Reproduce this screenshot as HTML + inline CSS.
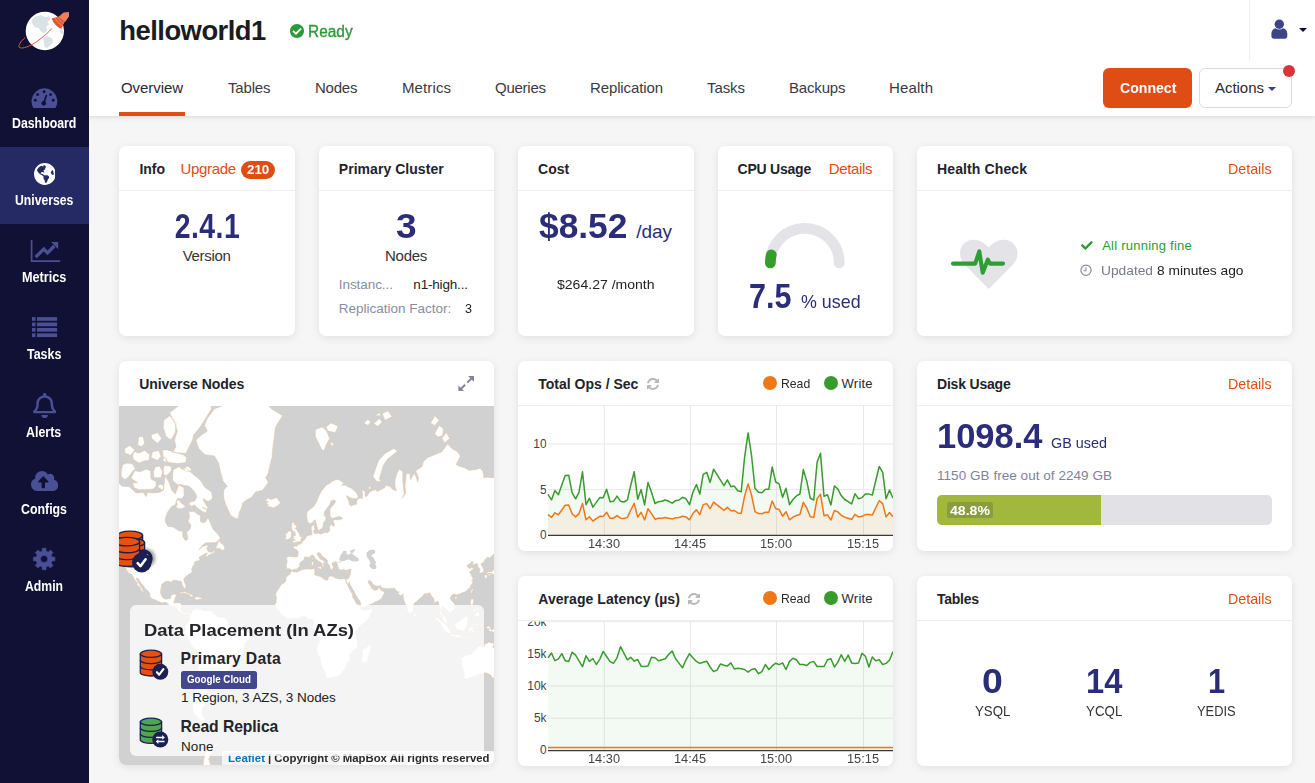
<!DOCTYPE html>
<html lang="en"><head><meta charset="utf-8"><title>helloworld1 - Overview</title>
<style>
html,body{margin:0;padding:0}
body{width:1315px;height:783px;overflow:hidden;background:#f6f6f6;font-family:"Liberation Sans",sans-serif;color:#333;position:relative}
.t{position:absolute;white-space:nowrap;line-height:1;display:block}
.ic{position:absolute;display:block}
.abs{position:absolute}
#side{position:absolute;left:0;top:0;width:89px;height:783px;background:#111135}
#side .act{position:absolute;left:0;top:147px;width:89px;height:77px;background:#252a65}
#head{position:absolute;left:89px;top:0;width:1226px;height:116px;background:#fff;box-shadow:0 1px 5px rgba(0,0,0,.13)}
.card{position:absolute;background:#fff;border-radius:7px;box-shadow:0 2px 9px rgba(0,0,0,.09);overflow:hidden}
.card .hr{position:absolute;left:0;right:0;top:44px;height:1px;background:#eeeef0}
.btn{position:absolute;top:68px;height:40px;border-radius:6px;box-sizing:border-box}
</style></head><body>
<nav id="side"><div class="act"></div><svg class="ic" style="left:14px;top:6px;width:62px;height:50px" viewBox="14 6 62 50">
<circle cx="44.85" cy="31" r="19.15" fill="#fff"/>
<path d="M31.5 21C33 17.5 37 15.5 41 15.3L45 17 49 16.5 50.5 19 47.5 22 49 24.5 46 27 47.5 30 44 33.5 40.5 31 39 28 35.5 27.5 33 25ZM43 37.5L47 36 51.5 38 53.5 41 51 45 47 48 44.5 47 44 42ZM59.5 29.5L62.5 29 63 33 61 34.5Z" fill="#dae2e6"/>
<path d="M51.7 28.7C45 36 37 41.5 33 44 27 47.5 21 49 19.3 47.3 18 45.5 20.5 41.5 24.9 37.9" fill="none" stroke="#e0602f" stroke-width="1" stroke-linecap="round"/>
<path d="M59 16.5L51.7 18.4C53 22.5 56.5 26.5 61.3 28.9L64.7 21.8Z" fill="#e4572e"/>
<path d="M55 17.6C56.2 21 59 24 62.9 25.6M57.6 17C58.6 19.8 60.8 22 63.9 23.5" fill="none" stroke="#ef8a66" stroke-width=".9"/>
<path d="M63.6 12.6L69 11.9V16.5L64.9 22.2 58.6 16.7Z" fill="#ee7f5a"/>
</svg><svg class="ic" style="left:30px;top:87px;width:30px;height:23px" viewBox="30 87 30 23"><path d="M33.40 108A12.90 12.90 0 1 1 55.40 108Q44.40 108.1 33.40 108Z" fill="#4a4f96"/><circle cx="35.3" cy="100.3" r="1.45" fill="#111135"/><circle cx="37.6" cy="94.6" r="1.45" fill="#111135"/><circle cx="44.1" cy="91.7" r="1.45" fill="#111135"/><circle cx="50.6" cy="94.6" r="1.45" fill="#111135"/><circle cx="53.2" cy="100.3" r="1.45" fill="#111135"/><circle cx="43.8" cy="103.3" r="2.3" fill="#111135"/><path d="M43.8 103.3L46.3 95.6" stroke="#111135" stroke-width="1.7" stroke-linecap="round"/></svg><svg class="ic" style="left:33.5px;top:163.2px;width:21.8px;height:21.9px" viewBox="0 8 496 496" preserveAspectRatio="none" ><path fill="#fff" d="M248 8C111.03 8 0 119.03 0 256s111.03 248 248 248 248-111.03 248-248S384.97 8 248 8zm82.29 357.6c-3.9 3.88-7.99 7.95-11.31 11.28-2.99 3-5.1 6.7-6.17 10.71-1.51 5.66-2.73 11.38-4.77 16.87l-17.39 46.85c-13.76 3-28 4.69-42.65 4.69v-27.38c1.69-12.62-7.64-36.26-22.63-51.25-6-6-9.37-14.14-9.37-22.63v-32.01c0-11.64-6.27-22.34-16.46-27.97-14.37-7.95-34.81-19.06-48.81-26.11-11.48-5.78-22.1-13.14-31.65-21.75l-.8-.72a114.792 114.792 0 0 1-18.06-20.74c-9.38-13.77-24.66-36.42-34.59-51.14 20.47-45.5 57.36-82.04 103.2-101.89l24.01 12.01C203.48 89.74 216 82.01 216 70.11v-11.3c7.99-1.29 16.12-2.11 24.39-2.42l28.3 28.3c6.25 6.25 6.25 16.38 0 22.63L264 112l-10.34 10.34c-3.12 3.12-3.12 8.19 0 11.31l4.69 4.69c3.12 3.12 3.12 8.19 0 11.31l-8 8a8.008 8.008 0 0 1-5.66 2.34h-8.99c-2.08 0-4.08.81-5.58 2.27l-9.92 9.65a8.008 8.008 0 0 0-1.58 9.31l15.59 31.19c2.66 5.32-1.21 11.58-7.15 11.58h-5.64c-1.93 0-3.79-.7-5.24-1.96l-9.28-8.06a16.017 16.017 0 0 0-15.55-3.1l-31.17 10.39a11.95 11.95 0 0 0-8.17 11.34c0 4.53 2.56 8.66 6.61 10.69l11.08 5.54c9.41 4.71 19.79 7.16 30.31 7.16s22.59 27.29 32 32h66.75c8.49 0 16.62 3.37 22.63 9.37l13.69 13.69a30.503 30.503 0 0 1 8.93 21.57 46.536 46.536 0 0 1-13.72 32.98zM417 274.25c-5.79-1.45-10.84-5-14.15-9.97l-17.98-26.97a23.97 23.97 0 0 1 0-26.62l19.59-29.38c2.32-3.47 5.5-6.29 9.24-8.15l12.98-6.49C440.2 193.59 448 223.87 448 256c0 8.67-.74 17.16-1.82 25.54L417 274.25z"/></svg><svg class="ic" style="left:30px;top:239px;width:32px;height:24px" viewBox="30 239 32 24"><path d="M31.6 240V261.1H60.2" fill="none" stroke="#4a4f96" stroke-width="1.7"/><path d="M35.6 257.2L43.8 249 47.5 252.8 54.3 246" fill="none" stroke="#4a4f96" stroke-width="3.3" stroke-linejoin="miter"/><path d="M51.2 242.1H58.2V249.2Z" fill="#4a4f96"/></svg><svg class="ic" style="left:31px;top:316px;width:28px;height:23px" viewBox="31 316 28 23"><rect x="32" y="317.10" width="3.5" height="3.7" fill="#4a4f96"/><rect x="37" y="317.10" width="20.1" height="3.7" fill="#4a4f96"/><rect x="32" y="322.52" width="3.5" height="3.7" fill="#4a4f96"/><rect x="37" y="322.52" width="20.1" height="3.7" fill="#4a4f96"/><rect x="32" y="327.94" width="3.5" height="3.7" fill="#4a4f96"/><rect x="37" y="327.94" width="20.1" height="3.7" fill="#4a4f96"/><rect x="32" y="333.36" width="3.5" height="3.7" fill="#4a4f96"/><rect x="37" y="333.36" width="20.1" height="3.7" fill="#4a4f96"/></svg><svg class="ic" style="left:32.6px;top:392.6px;width:23.4px;height:25px" viewBox="-0 0 448 512" preserveAspectRatio="none" ><path fill="#4a4f96" d="M439.39 362.29c-19.32-20.76-55.47-51.99-55.47-154.29 0-77.7-54.48-139.9-127.94-155.16V32c0-17.67-14.32-32-31.98-32s-31.98 14.33-31.98 32v20.84C118.56 68.1 64.08 130.3 64.08 208c0 102.3-36.15 133.53-55.47 154.29-6 6.45-8.66 14.16-8.61 21.71.11 16.4 12.98 32 32.1 32h383.8c19.12 0 32-15.6 32.1-32 .05-7.55-2.61-15.27-8.61-21.71zM67.53 368c21.22-27.97 44.42-74.33 44.53-159.42 0-.2-.06-.38-.06-.58 0-61.86 50.14-112 112-112s112 50.14 112 112c0 .2-.06.38-.06.58.11 85.1 23.31 131.46 44.53 159.42H67.53zM224 512c35.32 0 63.97-28.65 63.97-64H160.03c0 35.35 28.65 64 63.97 64z"/></svg><svg class="ic" style="left:30.7px;top:471.3px;width:27.3px;height:20px" viewBox="0 32 640 448" preserveAspectRatio="none" ><path fill="#4a4f96" d="M537.6 226.6c4.1-10.7 6.4-22.4 6.4-34.6 0-53-43-96-96-96-19.7 0-38.1 6-53.3 16.2C367 64.2 315.3 32 256 32c-88.4 0-160 71.6-160 160 0 2.7.1 5.4.2 8.1C40.2 219.8 0 273.2 0 336c0 79.5 64.5 144 144 144h368c70.7 0 128-57.3 128-128 0-61.9-44-113.6-102.4-125.4zM393.4 288H328v112c0 8.8-7.2 16-16 16h-48c-8.8 0-16-7.2-16-16V288h-65.4c-14.3 0-21.4-17.2-11.3-27.3l105.4-105.4c6.2-6.2 16.4-6.2 22.6 0l105.4 105.4c10.1 10.1 2.9 27.3-11.3 27.3z"/></svg><svg class="ic" style="left:32px;top:547px;width:25px;height:25px" viewBox="32 547 25 25"><path d="M42.30 548.21L46.00 548.21L46.15 551.15L48.28 552.03L50.47 550.06L53.09 552.68L51.12 554.87L52.00 557.00L54.94 557.15L54.94 560.85L52.00 561.00L51.12 563.13L53.09 565.32L50.47 567.94L48.28 565.97L46.15 566.85L46.00 569.79L42.30 569.79L42.15 566.85L40.02 565.97L37.83 567.94L35.21 565.32L37.18 563.13L36.30 561.00L33.36 560.85L33.36 557.15L36.30 557.00L37.18 554.87L35.21 552.68L37.83 550.06L40.02 552.03L42.15 551.15ZM40.55 559.00a3.6 3.6 0 1 0 7.2 0a3.6 3.6 0 1 0 -7.2 0Z" fill="#4a4f96" fill-rule="evenodd" stroke="#4a4f96" stroke-width=".6" stroke-linejoin="round"/></svg><span class="t" style="left:11.90px;top:116.82px;font-size:13.8px;font-weight:700;color:#fff;transform:scale(0.8935,1.0000);transform-origin:0 84.65%;">Dashboard</span><span class="t" style="left:14.70px;top:193.82px;font-size:13.8px;font-weight:700;color:#fff;transform:scale(0.8838,1.0000);transform-origin:0 84.65%;">Universes</span><span class="t" style="left:21.80px;top:270.82px;font-size:13.8px;font-weight:700;color:#fff;transform:scale(0.9190,1.0000);transform-origin:0 84.65%;">Metrics</span><span class="t" style="left:26.80px;top:347.82px;font-size:13.8px;font-weight:700;color:#fff;transform:scale(0.9027,1.0000);transform-origin:0 84.65%;">Tasks</span><span class="t" style="left:26.40px;top:425.82px;font-size:13.8px;font-weight:700;color:#fff;transform:scale(0.9000,1.0000);transform-origin:0 84.65%;">Alerts</span><span class="t" style="left:21.00px;top:502.82px;font-size:13.8px;font-weight:700;color:#fff;transform:scale(0.8956,1.0000);transform-origin:0 84.65%;">Configs</span><span class="t" style="left:25.20px;top:579.82px;font-size:13.8px;font-weight:700;color:#fff;transform:scale(0.8853,1.0000);transform-origin:0 84.65%;">Admin</span></nav><header><div id="head"></div><span class="t" style="left:119.30px;top:17.21px;font-size:27.4px;font-weight:700;color:#1b1b22;letter-spacing:-0.519px;">helloworld1</span><svg class="ic" style="left:289.9px;top:24.2px;width:14px;height:14px" viewBox="8 8 496 496" preserveAspectRatio="none" ><path fill="#2b9b38" d="M504 256c0 136.967-111.033 248-248 248S8 392.967 8 256 119.033 8 256 8s248 111.033 248 248zM227.314 387.314l184-184c6.248-6.248 6.248-16.379 0-22.627l-22.627-22.627c-6.248-6.249-16.379-6.249-22.628 0L216 308.118l-70.059-70.059c-6.248-6.248-16.379-6.248-22.628 0l-22.627 22.627c-6.248 6.248-6.248 16.379 0 22.627l104 104c6.249 6.249 16.379 6.249 22.628.001z"/></svg><span class="t" style="left:308.40px;top:23.78px;font-size:16.8px;color:#2b9b38;transform:scale(0.9193,1.0000);transform-origin:0 84.65%;-webkit-text-stroke:.4px #2b9b38;">Ready</span><span class="t" style="left:121.00px;top:80.10px;font-size:15px;color:#2a2a30;letter-spacing:-0.074px;">Overview</span><span class="t" style="left:228.00px;top:80.10px;font-size:15px;color:#3a3a42;letter-spacing:-0.172px;">Tables</span><span class="t" style="left:315.00px;top:80.10px;font-size:15px;color:#3a3a42;letter-spacing:-0.215px;">Nodes</span><span class="t" style="left:402.00px;top:80.10px;font-size:15px;color:#3a3a42;letter-spacing:0.109px;">Metrics</span><span class="t" style="left:495.00px;top:80.10px;font-size:15px;color:#3a3a42;letter-spacing:-0.255px;">Queries</span><span class="t" style="left:590.00px;top:80.10px;font-size:15px;color:#3a3a42;letter-spacing:-0.122px;">Replication</span><span class="t" style="left:707.00px;top:80.10px;font-size:15px;color:#3a3a42;letter-spacing:-0.086px;">Tasks</span><span class="t" style="left:789.00px;top:80.10px;font-size:15px;color:#3a3a42;letter-spacing:-0.174px;">Backups</span><span class="t" style="left:889.00px;top:80.10px;font-size:15px;color:#3a3a42;letter-spacing:0.128px;">Health</span><div class="abs" style="left:119px;top:112px;width:66px;height:4px;background:#e04d14"></div><div class="abs" style="left:1249px;top:0;width:1px;height:60px;background:#eeeef1"></div><svg class="ic" style="left:1270px;top:18px;width:19px;height:22px" viewBox="1270 18 19 22"><circle cx="1279.3" cy="24.3" r="4.7" fill="#3f4487"/><path d="M1271.4 36.2V33.6C1271.4 30.6 1273.4 28.6 1275.6 28.3 1277.8 29.9 1280.8 29.9 1283 28.3 1285.3 28.6 1287.3 30.6 1287.3 33.6V36.2C1287.3 37.7 1286.2 38.7 1284.8 38.7H1273.9C1272.5 38.7 1271.4 37.7 1271.4 36.2Z" fill="#3f4487"/></svg><svg class="ic" style="left:1299px;top:28px;width:8px;height:4px" viewBox="0 0 8 4"><path d="M0 0h8L4 4z" fill="#0e0e2c"/></svg><div class="btn" style="left:1103px;width:89px;background:#e04d14"></div><span class="t" style="left:1119.60px;top:80.30px;font-size:15px;font-weight:700;color:#fff;transform:scale(0.9400,1.0000);transform-origin:0 84.65%;">Connect</span><div class="btn" style="left:1199px;width:93px;background:#fff;border:1px solid #dcdce0"></div><span class="t" style="left:1215.00px;top:80.30px;font-size:15px;color:#2a2a30;letter-spacing:-0.034px;">Actions</span><svg class="ic" style="left:1268px;top:87px;width:8px;height:4px" viewBox="0 0 8 4"><path d="M0 0h8L4 4z" fill="#3a3f8f"/></svg><div class="abs" style="left:1283px;top:64.7px;width:12px;height:12px;border-radius:6px;background:#d93438"></div></header><main><section class="row"><div class="card" style="left:119px;top:146px;width:175.5px;height:190px"><div class="hr"></div></div><span class="t" style="left:139.50px;top:161.65px;font-size:14px;font-weight:700;color:#232329;letter-spacing:-0.052px;">Info</span><span class="t" style="left:180.60px;top:160.80px;font-size:15px;color:#e04d14;letter-spacing:-0.358px;">Upgrade</span><div class="abs" style="left:241px;top:161px;width:34px;height:18px;border-radius:9px;background:#e04d14"></div><span class="t" style="left:246.85px;top:163.83px;font-size:12.6px;font-weight:700;color:#fff;transform:scale(1.0611,1.0000);transform-origin:0 84.65%;">210</span><span class="t" style="left:174.81px;top:213.76px;font-size:28.4px;font-weight:700;color:#2b2d78;letter-spacing:0.444px;transform:scale(1.0000,1.2150);transform-origin:0 84.65%;">2.4.1</span><span class="t" style="left:182.75px;top:248.10px;font-size:15px;letter-spacing:-0.324px;">Version</span><div class="card" style="left:318.5px;top:146px;width:175.5px;height:190px"><div class="hr"></div></div><span class="t" style="left:338.80px;top:161.65px;font-size:14px;font-weight:700;color:#232329;letter-spacing:0.044px;">Primary Cluster</span><span class="t" style="left:395.61px;top:213.76px;font-size:28.4px;font-weight:700;color:#2b2d78;transform:scale(1.3060,1.2150);transform-origin:0 84.65%;">3</span><span class="t" style="left:385.05px;top:248.10px;font-size:15px;letter-spacing:-0.265px;">Nodes</span><span class="t" style="left:338.80px;top:277.57px;font-size:13.5px;color:#8a8c9f;letter-spacing:-0.065px;">Instanc...</span><span class="t" style="left:413.30px;top:277.57px;font-size:13.5px;color:#222;letter-spacing:-0.177px;">n1-high...</span><span class="t" style="left:338.80px;top:301.57px;font-size:13.5px;color:#8a8c9f;">Replication Factor:</span><span class="t" style="left:465.00px;top:301.57px;font-size:13.5px;color:#222;transform:scale(0.9314,1.0000);transform-origin:0 84.65%;">3</span><div class="card" style="left:518px;top:146px;width:175.5px;height:190px"><div class="hr"></div></div><span class="t" style="left:538.00px;top:161.85px;font-size:14px;font-weight:700;color:#232329;letter-spacing:0.025px;">Cost</span><span class="t" style="left:538.86px;top:213.76px;font-size:28.4px;font-weight:700;color:#2b2d78;transform:scale(1.2447,1.2150);transform-origin:0 84.65%;">$8.52</span><span class="t" style="left:636.30px;top:221.52px;font-size:19px;color:#2b2d78;letter-spacing:-0.041px;">/day</span><span class="t" style="left:556.80px;top:278.00px;font-size:13px;color:#222;transform:scale(1.0801,1.0000);transform-origin:0 84.65%;">$264.27 /month</span><div class="card" style="left:717.5px;top:146px;width:175.5px;height:190px"><div class="hr"></div></div><span class="t" style="left:737.60px;top:161.85px;font-size:14px;font-weight:700;color:#232329;letter-spacing:-0.234px;">CPU Usage</span><span class="t" style="left:828.70px;top:161.00px;font-size:15px;color:#e04d14;letter-spacing:-0.327px;">Details</span><svg class="ic" style="left:750px;top:210px;width:110px;height:65px" viewBox="750 210 110 65"><path d="M770.35 262.90A34.45 34.45 0 0 1 839.25 262.90" fill="none" stroke="#e3e3e8" stroke-width="10.7" stroke-linecap="round"/><path d="M770.35 262.90A34.45 34.45 0 0 1 771.30 254.86" fill="none" stroke="#33a02c" stroke-width="10.7" stroke-linecap="round"/></svg><span class="t" style="left:749.06px;top:283.56px;font-size:28.4px;font-weight:700;color:#2b2d78;transform:scale(1.0750,1.2150);transform-origin:0 84.65%;">7.5</span><span class="t" style="left:801.20px;top:291.92px;font-size:19px;color:#2b2d78;transform:scale(0.9404,1.0000);transform-origin:0 84.65%;">% used</span><div class="card" style="left:917px;top:146px;width:375px;height:190px"><div class="hr"></div></div><span class="t" style="left:937.00px;top:161.85px;font-size:14px;font-weight:700;color:#232329;letter-spacing:0.118px;">Health Check</span><span class="t" style="left:1227.80px;top:161.00px;font-size:15px;color:#e04d14;transform:scale(0.9507,1.0000);transform-origin:0 84.65%;">Details</span><svg class="ic" style="left:945px;top:235px;width:80px;height:60px" viewBox="945 235 80 60">
<path d="M988.7 289.1L964.5 264.5C957.5 257 959 246 966.5 241.7 973.5 237.7 982 240 988.7 247.5 995.4 240 1004 237.7 1011 241.7 1018.5 246 1020 257 1013 264.5Z" fill="#e3e3e8"/>
<path d="M953 263.6H975.2L979.3 251.4 982.7 272.8 987.8 259.7 990 263.6H1003" fill="none" stroke="#2e9d35" stroke-width="4.1" stroke-linecap="round" stroke-linejoin="round"/></svg><svg class="ic" style="left:1081.1px;top:241.1px;width:11.7px;height:9px" viewBox="0 65.1 512 381.8" preserveAspectRatio="none" ><path fill="#2b9b38" d="M173.898 439.404l-166.4-166.4c-9.997-9.997-9.997-26.206 0-36.204l36.203-36.204c9.997-9.998 26.207-9.998 36.204 0L192 312.69 432.095 72.596c9.997-9.997 26.207-9.997 36.204 0l36.203 36.204c9.997 9.997 9.997 26.206 0 36.204l-294.4 294.401c-9.998 9.997-26.207 9.997-36.204-.001z"/></svg><span class="t" style="left:1102.20px;top:238.80px;font-size:13px;color:#2b9b38;letter-spacing:0.240px;">All running fine</span><svg class="ic" style="left:1079px;top:263px;width:14px;height:14px" viewBox="1079 263 14 14"><circle cx="1086" cy="270.3" r="5.1" fill="none" stroke="#8a8c9f" stroke-width="1.2"/><path d="M1086 267.2V270.7H1083.4" fill="none" stroke="#8a8c9f" stroke-width="1.1"/></svg><span class="t" style="left:1101.00px;top:263.50px;font-size:13px;color:#777b8a;transform:scale(1.0579,1.0000);transform-origin:0 84.65%;">Updated</span><span class="t" style="left:1157.40px;top:263.50px;font-size:13px;color:#222;transform:scale(1.0591,1.0000);transform-origin:0 84.65%;">8 minutes ago</span></section><section class="map"><div class="card" style="left:119px;top:361px;width:375px;height:404px"><svg class="ic" style="left:0;top:45px;width:375px;height:359px" viewBox="119 406 375 359"><rect x="119" y="406" width="375" height="359" fill="#d1d1d1"/><path d="M99.2,485.8L107.7,487.0L114.8,483.8L117.7,482.1L121.9,486.2L129.0,486.6L136.1,492.9L143.3,492.5L146.1,496.6L147.5,492.5L154.6,492.9L160.3,492.1L163.2,490.2L165.3,475.9L168.9,482.1L171.7,490.2L175.3,494.0L178.8,485.0L183.8,487.5L184.1,495.8L181.7,498.7L177.4,498.4L175.3,504.5L171.0,507.1L167.4,512.4L165.3,518.3L165.3,521.9L168.1,526.5L173.1,527.0L178.8,530.8L182.7,531.3L182.8,536.4L185.2,540.3L187.3,539.9L187.6,536.4L186.6,532.3L190.2,529.0L190.9,525.1L188.1,521.6L189.5,516.9L188.8,511.2L194.5,511.8L198.0,514.5L200.7,515.4L200.1,521.1L203.0,523.0L205.8,521.6L208.0,517.4L210.8,523.8L212.9,529.0L215.8,532.0L218.6,535.2L220.3,538.0L218.9,539.9L215.8,542.6L211.5,542.8L205.8,542.8L202.3,545.4L200.1,548.6L198.7,549.9L202.3,546.5L207.3,545.0L208.3,546.5L206.5,548.0L207.5,549.7L208.0,551.3L209.4,552.0L212.2,552.4L213.9,549.7L214.7,551.8L212.9,553.4L209.4,554.8L206.5,556.8L205.5,556.2L207.5,553.2L205.8,553.4L204.4,554.2L201.6,555.8L199.7,556.8L199.0,558.5L200.1,559.7L200.1,560.4L198.0,560.8L195.9,561.2L194.5,562.3L194.5,564.2L193.0,565.6L192.7,567.1L191.6,568.9L191.9,570.7L192.3,571.9L190.9,572.9L188.8,574.3L187.1,575.5L184.8,577.4L183.9,579.5L184.1,581.5L185.1,583.4L185.9,586.0L185.5,588.4L184.5,588.5L183.4,587.0L181.9,584.4L182.1,582.5L180.2,580.8L178.1,581.3L176.7,580.2L174.5,580.3L172.4,580.5L172.7,582.3L171.0,582.1L169.1,581.5L166.3,581.3L164.6,582.1L161.7,584.4L161.3,587.3L160.6,590.4L160.6,592.9L161.5,595.5L162.7,597.6L164.6,598.7L165.7,599.3L168.1,598.7L169.9,598.7L170.8,597.2L171.1,595.0L173.8,594.3L176.0,594.3L176.3,595.8L175.1,597.8L174.8,599.3L174.1,601.8L173.4,602.8L175.3,602.8L177.7,602.7L180.2,603.0L181.4,604.0L181.1,607.0L180.7,609.6L181.7,611.3L182.8,612.6L184.5,613.0L186.2,612.0L188.1,612.2L189.8,613.5L190.5,614.2L192.3,610.6L193.7,609.9L195.9,609.1L197.7,607.8L198.3,609.9L200.1,609.1L200.1,608.3L202.3,610.4L205.8,610.4L208.0,611.0L210.1,610.3L211.5,610.4L212.9,612.0L213.7,613.5L215.8,614.5L217.9,616.8L221.5,617.2L223.6,617.6L225.7,618.8L227.2,620.2L228.6,623.0L228.6,625.2L227.9,626.0L230.7,626.3L232.9,626.6L236.4,628.9L238.5,629.2L240.7,629.7L243.5,629.9L246.4,632.1L249.5,633.0L250.2,635.9L249.9,638.5L247.8,640.8L246.4,642.8L244.7,644.2L244.2,647.2L244.2,650.9L243.2,653.9L241.8,656.9L240.0,659.2L237.8,659.2L235.7,660.5L233.6,661.2L231.4,663.1L230.6,665.5L230.4,667.9L228.6,670.4L227.2,672.8L225.3,674.5L223.6,677.1L221.8,678.6L219.3,678.6L216.8,677.1L218.2,679.7L218.6,681.4L217.6,684.1L214.4,685.7L211.5,685.7L211.1,688.7L208.7,689.6L207.3,689.3L207.3,691.9L209.1,692.7L207.0,694.4L206.5,697.4L203.7,699.4L203.8,701.5L206.1,703.2L203.7,706.9L201.6,709.1L201.6,712.5L202.4,713.4L202.3,715.5L205.8,719.2L207.0,718.9L204.4,720.4L200.9,720.4L198.0,717.9L195.2,714.8L193.3,712.5L192.3,708.0L192.3,703.6L193.7,701.1L192.3,700.5L194.5,695.4L195.9,691.5L194.7,690.6L195.2,686.8L195.0,683.2L196.2,680.5L197.6,676.2L198.0,672.0L198.2,668.7L198.9,665.5L199.4,662.3L199.6,659.2L199.9,656.2L199.7,652.2L198.0,650.6L195.2,649.1L192.7,647.6L191.2,645.4L189.9,642.8L188.5,639.9L187.3,637.3L186.1,635.3L184.2,634.1L184.1,631.7L185.5,630.4L185.9,629.2L184.6,628.7L185.1,627.0L185.9,625.5L185.9,624.3L187.5,623.8L188.1,622.0L189.8,620.2L189.5,617.8L189.6,615.6L188.5,614.6L188.3,613.6L187.3,612.7L186.2,613.3L185.4,613.9L185.9,615.0L184.5,615.2L183.5,614.2L181.8,613.9L180.7,613.3L180.8,612.6L179.2,611.9L178.7,611.3L177.7,611.0L177.8,609.7L176.4,608.1L175.1,607.0L174.8,606.5L173.1,606.4L171.4,605.8L169.6,605.3L168.4,604.6L166.3,602.5L164.6,602.2L162.5,603.0L160.3,602.2L157.8,601.2L155.3,599.9L152.5,599.0L150.4,597.5L149.7,595.8L149.9,594.1L148.9,592.0L146.4,589.6L144.3,587.8L144.0,586.0L142.5,584.9L141.1,583.3L139.7,581.2L138.6,578.9L136.4,577.9L136.6,579.5L138.3,582.0L139.4,584.4L140.8,586.6L142.1,588.9L142.8,590.1L144.0,591.7L143.3,592.1L142.1,591.0L140.4,589.3L140.1,587.3L138.3,586.0L136.9,584.4L137.3,582.8L135.4,580.8L134.3,579.2L133.2,576.7L131.3,574.1L128.3,573.3L128.0,571.9L126.3,569.6L125.5,567.6L124.8,566.6L123.6,564.4L122.9,562.7L123.2,559.7L122.6,557.7L123.3,554.2L123.3,551.3L122.3,546.7L124.8,547.2L125.5,548.6L125.1,545.4L122.6,543.2L119.1,541.0L117.7,537.6L114.8,533.3L112.7,530.3L109.8,525.1L106.3,522.5L103.4,519.7L99.2,518.3ZM124.2,546.7L121.9,545.9L117.2,541.7L118.4,541.2L121.6,542.8L123.6,545.0ZM212.5,497.3L211.5,492.1L204.4,487.0L202.3,482.9L198.7,478.6L194.5,475.4L190.2,471.7L185.2,467.2L183.1,469.7L178.8,466.7L173.1,469.7L172.4,479.9L175.3,482.9L178.1,485.0L180.2,484.2L183.1,485.0L187.3,485.8L190.2,487.0L193.7,491.0L195.9,494.0L196.6,497.6L194.5,501.1L189.5,502.2L188.8,504.5L191.6,506.5L194.5,504.8L198.0,508.4L202.3,511.5L205.8,512.7L207.3,510.0L202.3,507.1L206.5,509.3L208.0,507.8L204.4,502.2L203.0,498.7L208.0,501.5L211.5,499.4ZM131.2,477.7L134.7,470.7L140.4,471.7L146.1,469.2L150.4,470.7L151.1,479.0L156.1,482.1L156.1,486.2L153.2,489.0L146.1,489.4L139.0,489.8L134.0,487.5L132.6,483.3L137.6,482.5L132.6,479.5ZM121.2,475.9L124.8,479.5L128.3,477.3L132.6,471.2L135.4,468.7L132.6,464.1L126.9,463.1L122.6,464.7L121.2,471.7ZM133.3,459.3L139.0,463.1L144.0,460.9L148.9,460.4L149.7,454.7L144.7,450.5L139.0,452.9L134.0,451.7L132.6,455.9ZM153.9,477.7L161.0,477.7L162.5,471.7L159.6,466.2L155.3,466.7L153.5,471.7ZM163.9,475.0L166.7,475.4L171.4,470.7L171.0,466.2L164.2,465.2L163.2,470.7ZM158.2,487.5L163.2,490.2L164.2,486.2L161.0,484.2L158.2,485.0ZM163.2,457.6L168.9,462.5L177.4,463.6L185.9,462.5L186.6,457.6L183.1,454.7L173.1,451.7L167.4,449.9L162.5,449.9ZM151.1,457.6L157.5,460.4L161.0,456.4L158.9,450.5L152.5,451.7ZM172.4,452.3L185.9,453.5L189.1,446.7L192.3,440.6L193.7,434.9L200.1,427.1L204.4,420.3L211.5,408.8L210.1,402.4L200.1,396.7L188.8,397.9L177.4,406.7L169.6,412.8L174.5,422.9L177.4,431.1L174.5,439.9L176.0,446.7ZM163.2,427.1L166.0,436.4L171.0,439.9L175.3,432.6L176.0,422.9L169.6,415.7L163.9,420.3ZM151.8,438.5L157.5,443.4L161.7,438.5L157.5,432.6L151.1,434.9ZM124.8,452.9L130.5,455.3L134.7,449.9L129.7,445.4L124.8,448.6ZM137.6,444.7L141.1,446.7L144.7,443.4L143.3,437.1L139.0,436.4ZM162.5,460.4L166.0,462.5L167.0,458.7L163.9,456.4ZM184.5,470.7L188.8,471.7L191.6,469.7L188.1,466.2L185.2,466.7ZM183.1,536.1L185.6,536.9L185.1,535.9ZM176.0,501.1L179.5,500.1L180.9,502.8L184.5,505.5L185.5,506.8L182.4,508.4L178.8,508.7L175.7,506.8L177.4,504.5ZM215.4,548.4L216.5,546.3L218.2,541.9L220.6,539.9L220.1,542.8L222.9,544.3L224.3,546.3L224.7,548.6L223.6,550.3L220.8,549.7L220.1,548.4ZM178.8,593.7L181.7,592.0L184.5,591.7L187.3,592.7L190.2,594.1L193.0,595.5L194.2,596.3L192.3,596.7L189.2,596.7L190.2,595.6L188.1,594.3L185.2,593.5L183.1,592.9L180.9,593.4L179.5,594.0ZM193.9,598.7L195.9,596.7L197.7,596.9L200.1,597.2L202.4,598.7L201.6,599.1L199.4,599.3L197.7,600.0L195.2,599.3ZM188.3,599.0L191.2,599.3L190.3,599.9L188.5,599.6ZM204.1,598.8L206.4,599.0L206.3,599.6L204.1,599.6ZM198.7,448.6L205.1,454.7L214.4,455.9L218.6,463.1L220.8,473.1L222.9,480.8L227.2,486.2L223.6,490.2L223.6,497.6L225.7,504.5L228.6,510.9L230.7,515.4L235.0,518.0L237.3,518.9L238.5,516.9L239.3,512.4L241.4,507.8L242.8,502.8L246.4,500.1L251.3,497.6L255.6,492.1L262.7,490.2L267.0,484.2L268.4,482.1L265.6,477.7L268.4,473.1L269.8,465.7L272.0,457.6L272.7,448.6L274.1,438.5L275.5,427.1L282.6,415.7L271.3,408.8L257.0,393.1L242.8,393.1L228.6,403.5L214.4,408.8L207.3,418.5L204.4,425.4L207.3,431.1L201.6,434.9L195.9,439.9ZM265.1,501.1L267.7,498.0L271.3,499.4L276.9,497.6L279.1,501.1L280.4,502.8L278.4,505.2L273.4,508.1L269.8,506.8L267.4,506.8L268.4,504.5L265.6,503.2L268.4,501.8ZM286.9,568.9L286.2,565.8L287.2,561.6L286.6,557.7L288.3,556.4L291.9,556.8L294.7,557.0L297.1,557.0L298.0,554.8L298.1,551.8L296.6,549.7L293.3,548.0L292.9,546.7L295.4,545.9L297.4,546.3L297.1,543.9L298.1,544.6L300.0,544.3L301.8,543.0L302.0,541.2L304.0,540.3L305.4,538.7L306.4,536.4L308.2,535.4L309.9,535.0L311.8,535.0L311.9,531.8L311.4,530.3L311.2,527.8L311.8,526.2L314.6,524.6L314.3,527.8L315.1,528.5L313.9,530.3L313.4,531.5L313.9,532.8L315.3,534.0L316.8,533.5L318.9,533.0L320.0,534.2L322.5,533.3L326.0,532.3L327.6,533.0L328.1,531.8L329.6,531.0L329.6,527.0L330.3,525.1L331.8,524.6L333.1,526.5L334.1,525.9L334.3,523.0L333.1,521.9L333.0,520.5L335.3,519.7L339.5,519.7L342.7,518.6L340.2,516.6L336.7,517.1L332.4,518.6L330.0,516.3L330.0,512.4L329.9,509.3L331.7,506.8L334.5,503.5L335.7,501.1L333.8,500.1L331.0,500.8L330.0,504.2L326.7,508.7L324.6,511.5L324.2,515.4L326.0,517.7L325.7,520.0L323.6,522.2L323.2,525.1L322.5,528.5L320.3,529.0L319.9,530.5L318.2,530.5L317.6,528.5L316.5,525.1L315.6,521.1L314.9,519.7L313.2,521.4L311.1,523.5L309.4,523.5L307.7,521.6L306.8,517.4L306.8,513.9L307.2,511.8L309.7,509.6L311.8,508.1L313.9,506.1L316.1,502.8L317.5,499.4L318.9,495.8L321.0,491.7L323.2,489.0L326.0,485.4L328.9,483.8L332.4,481.2L336.4,479.5L339.5,479.9L343.8,482.9L341.7,485.4L345.2,485.0L347.3,486.6L351.6,488.2L356.6,492.9L358.3,496.6L356.6,498.7L352.3,498.4L348.8,496.9L346.3,495.8L348.8,501.1L349.2,504.5L351.6,506.1L353.7,504.8L356.6,504.2L356.6,500.5L359.7,498.0L362.3,498.7L362.7,494.0L361.6,489.8L365.1,491.4L365.1,496.6L367.3,495.8L369.4,492.1L375.1,489.4L377.2,491.4L382.2,489.0L385.0,487.5L385.7,485.0L390.7,487.0L392.1,489.0L396.4,491.0L395.0,486.2L395.0,479.9L397.1,473.1L399.3,469.2L402.8,471.7L402.8,479.9L403.5,488.2L404.2,494.0L402.1,498.4L405.7,492.9L404.9,486.2L405.7,479.9L406.4,473.1L409.9,474.0L410.6,479.9L414.2,473.1L416.3,477.7L417.7,482.1L418.5,477.7L415.6,470.7L422.0,466.7L423.4,461.5L427.7,457.6L434.8,454.7L441.9,451.7L447.6,444.1L451.9,448.6L457.6,451.7L460.4,455.9L456.1,464.7L460.4,466.7L464.7,467.7L468.9,470.2L475.3,469.7L480.3,468.2L483.2,471.7L483.9,477.7L487.4,477.3L491.7,477.7L496.0,477.7L498.8,473.1L505.9,473.1L513.0,518.3L500.2,536.4L499.5,543.2L498.8,547.6L496.0,551.8L493.1,554.8L489.6,558.1L487.4,557.3L485.6,559.1L484.3,560.6L483.9,561.9L481.0,563.8L481.0,564.9L482.2,566.0L483.7,568.9L483.9,571.5L483.2,572.2L481.0,572.9L479.3,573.1L479.6,571.0L479.8,568.9L478.9,567.6L477.5,567.3L477.9,565.8L477.8,564.4L476.5,563.6L474.6,564.2L472.5,565.6L472.9,563.4L473.2,562.1L471.8,561.8L469.7,563.8L467.5,564.9L467.1,566.2L468.8,568.0L469.7,568.5L471.5,567.5L473.9,568.2L473.6,569.1L471.1,570.7L469.4,572.4L470.7,573.6L471.5,575.8L472.9,577.9L473.1,579.4L471.5,580.3L472.9,581.0L472.6,583.3L471.2,584.9L470.1,587.3L468.9,588.5L467.5,589.8L465.7,591.5L462.5,592.6L461.3,593.2L458.3,594.3L456.7,594.7L456.4,596.1L455.7,594.4L454.0,594.0L451.9,595.0L451.3,596.3L450.2,598.1L451.2,599.9L452.6,601.7L454.4,603.3L455.1,606.2L455.0,608.4L453.6,609.9L451.9,610.7L451.2,612.0L449.0,613.3L448.7,611.6L448.0,610.7L446.9,610.4L445.9,608.8L444.8,607.8L443.2,607.4L442.6,606.2L441.9,607.0L441.8,608.7L440.8,610.9L441.2,612.5L442.2,613.6L442.6,615.3L444.1,615.9L445.2,616.8L446.6,618.5L446.9,620.2L446.9,621.9L447.9,623.6L446.8,623.6L445.1,622.5L443.8,621.5L442.8,619.6L442.3,617.8L442.2,616.3L441.2,615.2L439.8,614.2L439.5,612.7L439.9,610.6L440.1,608.4L439.4,606.2L438.8,604.0L438.5,601.8L437.4,601.1L435.5,602.8L433.8,602.5L434.1,600.3L433.4,598.1L432.0,596.6L430.8,595.0L430.3,593.1L428.4,593.1L426.3,593.8L424.1,594.1L423.1,595.8L421.3,597.2L419.2,599.1L416.7,601.5L414.9,602.7L413.8,604.0L413.8,606.7L413.2,609.1L413.2,610.9L412.1,612.3L410.9,612.9L409.9,614.0L408.5,612.7L407.5,609.9L406.1,607.0L405.4,604.0L404.2,601.8L403.4,598.2L403.1,595.8L403.0,593.8L402.4,594.9L400.5,595.5L398.1,593.7L397.8,593.1L399.7,592.1L397.5,591.7L396.4,590.7L395.3,589.5L394.3,588.2L391.4,588.5L387.2,588.7L383.6,588.2L381.2,587.6L380.5,585.7L377.9,586.2L375.8,586.0L372.9,584.4L371.5,581.7L370.1,580.7L368.7,580.8L368.0,581.7L368.7,583.4L370.1,585.4L371.1,586.8L371.9,588.9L372.5,587.3L372.9,588.4L372.9,589.8L374.4,590.1L376.5,590.3L378.3,588.4L379.8,587.0L380.1,589.2L381.5,590.7L383.2,591.2L384.7,592.7L382.9,595.8L381.9,598.1L380.1,599.6L377.9,601.1L375.1,601.8L373.9,603.1L370.8,604.3L368.0,605.5L363.7,607.2L361.6,607.4L360.9,605.5L360.4,603.3L360.1,601.4L358.7,599.6L357.3,597.3L355.5,594.6L354.5,592.0L352.7,589.6L351.6,587.3L349.9,584.4L349.2,583.3L349.5,581.7L348.6,583.9L348.3,584.4L347.3,583.3L346.1,581.0L345.6,578.9L348.1,578.7L349.1,577.5L349.5,575.8L350.6,573.3L350.8,571.0L351.2,569.4L349.2,569.2L347.3,570.3L345.2,570.3L343.2,569.2L341.7,570.3L339.8,569.4L338.5,568.9L338.4,567.1L337.4,566.2L337.8,564.4L337.0,563.4L336.7,562.3L336.4,561.8L333.8,561.9L333.5,563.4L332.1,562.7L332.0,564.7L333.1,566.2L333.8,567.1L332.7,568.0L332.7,569.6L331.6,569.8L330.6,569.2L329.9,567.5L330.3,566.6L329.3,565.3L328.1,564.0L327.3,562.5L327.4,560.2L326.0,558.7L323.9,557.3L321.7,555.8L320.7,553.8L319.2,552.6L317.3,553.0L317.3,555.2L319.0,556.8L319.9,558.9L322.5,559.9L325.3,562.3L326.0,563.2L324.2,562.7L323.7,562.7L323.2,564.2L324.0,565.3L323.2,566.4L322.0,567.2L322.2,565.6L322.0,563.4L320.3,562.1L318.2,561.0L317.1,560.0L315.3,558.7L314.3,556.8L313.6,555.6L312.2,555.0L310.4,556.2L308.9,557.5L306.8,557.0L305.4,556.8L304.0,557.7L304.3,559.1L302.8,560.8L300.8,561.9L299.3,564.4L300.0,565.6L298.8,567.1L297.1,568.9L296.4,569.2L293.4,569.4L292.0,570.5L290.7,569.6L289.7,568.5L288.3,568.9ZM345.6,578.9L343.8,578.4L342.1,579.0L338.1,578.7L335.3,578.0L332.4,576.3L330.3,576.0L328.1,577.5L328.1,579.5L326.7,580.3L323.9,579.2L321.5,577.0L318.5,576.0L315.6,575.3L314.2,574.1L315.1,571.9L314.6,569.8L315.3,568.9L313.9,568.4L311.8,569.1L308.9,568.9L305.4,569.1L304.0,569.2L301.1,570.0L298.8,571.2L296.9,572.2L295.4,571.9L293.3,572.1L292.0,570.8L291.2,571.2L290.0,574.1L288.3,575.2L286.6,576.8L285.8,578.5L285.9,580.3L285.2,582.0L283.3,583.6L281.2,584.6L279.8,586.8L278.4,589.2L276.9,590.9L275.5,594.6L276.5,597.3L276.2,600.3L276.2,602.5L274.8,604.5L275.8,606.5L275.9,608.0L277.7,609.4L278.8,610.9L280.2,612.0L280.9,613.5L281.9,615.0L283.5,615.9L285.5,617.3L287.6,618.8L289.0,619.3L291.2,618.6L294.0,618.2L296.9,618.8L299.7,617.8L301.4,616.9L303.3,616.6L305.4,616.6L306.8,617.3L307.5,619.1L308.9,619.5L311.1,619.2L312.5,619.6L313.5,620.3L313.6,622.0L313.2,624.2L312.9,625.6L312.2,626.7L313.2,628.7L314.6,630.6L316.5,632.3L317.2,634.1L318.2,636.3L318.6,638.5L319.3,641.1L318.9,643.2L317.5,645.3L316.8,647.9L316.5,650.6L317.2,652.8L318.6,655.9L320.2,658.5L320.3,660.8L321.0,664.4L322.5,667.6L323.9,670.0L325.0,672.8L325.7,675.0L325.9,677.4L327.4,678.3L328.1,678.5L331.0,677.4L333.8,677.2L336.3,677.1L338.8,675.7L340.9,673.7L343.1,671.2L344.1,669.5L345.9,667.6L346.5,664.7L346.3,663.6L348.1,662.2L350.2,660.8L350.2,657.7L349.5,655.4L349.5,654.3L351.6,652.7L353.7,650.6L356.6,649.0L357.7,646.9L357.4,644.2L357.3,641.3L356.6,639.9L355.9,637.7L355.7,635.3L355.0,633.4L355.6,632.0L356.6,629.9L358.0,628.4L359.4,626.7L361.6,624.6L364.4,622.5L367.3,619.9L369.4,617.1L370.8,614.2L372.2,610.9L372.7,608.7L370.8,609.0L368.0,609.6L365.1,610.1L363.0,610.7L361.3,609.1L360.9,607.5L359.4,605.9L357.7,604.3L356.2,603.3L355.2,601.1L354.2,599.1L352.7,597.3L352.6,595.0L352.2,593.5L350.3,590.7L349.5,588.9L348.1,586.0L347.3,584.4L346.2,582.1L345.9,581.0ZM369.8,642.8L371.2,647.9L370.1,650.9L368.7,655.4L367.3,660.0L366.5,662.3L364.0,663.1L362.3,662.0L361.3,658.5L362.7,655.1L362.3,651.6L363.0,649.0L365.5,648.1L367.7,646.4L369.0,644.2ZM291.9,543.0L294.7,542.6L297.6,541.7L300.1,541.5L301.7,540.6L300.6,539.9L302.0,537.6L301.5,536.6L300.1,536.6L299.8,535.0L299.0,533.0L297.6,531.5L296.9,529.5L295.4,529.0L296.1,527.8L296.9,525.1L294.7,524.6L294.0,524.9L295.1,522.5L292.6,522.2L291.5,524.9L291.6,527.8L291.9,530.3L292.9,530.8L292.6,532.0L294.7,531.8L295.3,534.0L295.4,535.4L293.6,535.7L293.3,536.9L294.0,537.8L292.4,539.2L294.0,539.6L295.4,540.1L293.7,540.6ZM285.5,539.6L287.6,539.6L290.6,538.3L291.2,535.7L291.7,532.8L290.7,531.0L288.3,531.0L287.6,532.8L285.5,533.5L285.8,535.7L286.2,537.1L285.1,538.5ZM317.5,567.1L321.9,566.6L321.3,569.4L317.5,567.8ZM311.4,561.8L313.5,561.4L313.5,564.9L311.8,565.3ZM311.9,558.7L313.2,557.9L312.9,560.6ZM333.3,571.5L337.1,572.1L333.8,572.4ZM345.6,572.4L348.8,571.4L347.9,572.6L345.9,573.1ZM315.3,436.4L318.9,443.4L321.0,448.6L323.9,451.1L326.0,445.4L329.6,438.5L326.7,431.1L322.5,427.1L315.3,429.5ZM326.0,427.1L331.0,422.9L338.1,426.3L335.3,432.6L328.1,431.1ZM329.6,442.0L333.8,443.4L332.4,446.7ZM363.7,422.9L368.0,419.4L370.8,422.0L368.0,425.4ZM373.7,423.7L379.3,418.5L382.2,422.0L377.9,426.3ZM382.2,413.8L387.9,410.8L392.1,416.6L385.0,420.3ZM375.1,415.7L379.3,412.8L380.8,415.7ZM372.9,476.4L375.8,468.2L378.6,460.4L385.0,453.5L393.6,448.6L397.5,451.1L387.9,458.7L383.6,464.7L381.5,471.7L379.3,479.0L381.5,481.7L376.5,481.2ZM368.4,487.5L370.1,486.2L371.1,488.2L369.4,489.4ZM434.8,433.4L439.1,425.4L443.3,428.7L442.6,435.6L437.7,437.1ZM430.5,422.9L434.8,415.7L439.1,420.3L434.8,425.4ZM441.9,438.5L446.2,432.6L449.7,438.5L444.8,442.7ZM484.6,575.0L487.0,574.8L487.3,576.2L486.4,578.5L485.4,578.9L484.9,577.2L484.2,575.8ZM488.1,574.3L491.0,573.6L490.7,574.8L488.9,576.2ZM486.0,574.1L486.0,573.4L488.1,571.7L490.3,571.5L492.4,571.4L493.1,570.1L494.3,568.5L494.8,569.2L496.7,568.4L498.1,566.2L498.8,563.4L498.8,561.0L500.8,560.8L501.7,564.4L500.2,567.1L499.9,570.7L498.8,572.1L497.4,572.1L496.7,572.9L494.5,573.1L494.4,573.6L492.8,575.0L492.0,573.6L490.3,573.1L488.1,573.8ZM471.8,588.5L473.2,588.9L471.8,593.5L470.7,592.0ZM454.3,597.8L456.9,596.6L457.6,597.3L455.4,599.3ZM413.2,611.9L415.2,613.5L416.0,615.6L414.2,617.1L413.2,614.9ZM471.1,598.8L473.5,599.1L473.6,601.8L472.6,604.8L475.8,606.2L476.1,607.5L473.9,606.2L471.2,605.5L470.4,602.5ZM473.2,615.6L475.3,613.3L478.2,611.6L479.6,614.2L478.9,616.6L477.9,617.5L476.1,616.3L473.5,614.9ZM476.8,607.7L478.5,609.1L477.5,611.3L476.5,610.1ZM473.2,608.7L475.1,609.1L475.3,612.0L474.1,612.5L473.2,610.6ZM466.4,613.6L469.7,609.4L469.9,610.6L467.0,613.9ZM454.7,625.2L454.7,623.2L456.6,623.2L458.0,621.8L460.4,620.9L461.8,619.1L464.0,617.8L465.7,615.8L467.1,616.8L469.2,618.2L467.8,619.5L467.0,620.9L467.5,622.8L468.9,624.2L467.2,624.6L466.8,626.7L465.4,627.9L465.1,630.2L462.7,631.4L460.4,630.3L458.6,630.3L456.4,629.6L456.1,627.7L455.0,626.5ZM435.2,617.6L438.4,618.2L440.1,620.2L442.3,622.0L444.5,623.2L446.9,625.6L448.3,628.2L450.5,629.9L450.2,633.9L448.3,633.7L445.2,631.3L443.1,628.7L442.3,626.9L440.2,623.2L437.7,620.9L435.5,618.8ZM449.5,635.3L451.5,634.1L454.0,635.0L457.3,634.7L460.1,635.4L462.5,636.7L462.4,637.9L457.6,637.4L453.3,636.7L451.0,636.2ZM463.3,637.3L466.1,637.4L468.9,637.6L471.8,637.6L474.6,637.4L474.3,638.2L470.4,638.3L466.1,638.5L463.5,638.2ZM475.3,640.3L477.5,638.5L480.3,637.6L479.6,638.7L476.8,640.2ZM469.7,633.4L469.7,630.6L468.7,629.6L470.1,625.9L470.8,624.5L471.8,623.9L474.6,624.3L477.5,623.3L476.8,625.0L473.2,625.0L471.1,625.0L470.7,627.0L472.5,626.9L475.1,626.7L474.3,627.7L472.6,628.3L473.6,630.3L474.6,631.6L473.9,633.1L472.5,632.3L471.8,629.4L470.9,629.9L470.9,633.4ZM485.9,627.4L487.7,626.2L490.3,626.7L490.6,628.7L491.7,630.3L493.8,628.7L496.0,627.9L500.2,629.3L505.9,632.0L508.8,634.1L507.3,637.0L500.2,638.5L497.4,637.0L496.0,637.4L497.0,635.6L496.0,633.4L493.1,632.1L490.3,631.2L488.9,631.3L488.6,629.9L487.4,629.6L489.6,628.9L487.4,628.4ZM481.0,622.8L482.5,623.5L482.5,626.3L481.3,624.9ZM461.8,657.7L465.7,655.6L468.9,654.6L471.8,654.0L473.5,651.6L473.6,650.1L475.3,650.6L476.8,648.7L478.2,646.4L480.3,645.7L481.7,647.2L483.9,647.0L484.2,645.0L485.7,643.4L488.1,642.8L488.4,641.8L491.7,643.1L494.3,643.1L493.8,645.0L492.8,647.2L495.3,648.7L498.1,650.9L499.9,650.9L500.9,647.2L501.1,643.5L502.4,640.9L503.8,646.2L506.3,647.2L507.3,652.4L510.9,654.6L512.3,657.7L514.5,660.3L517.3,663.1L518.0,667.1L517.3,672.0L515.2,676.2L513.0,681.4L513.0,683.2L509.5,684.1L507.8,685.9L505.2,684.5L503.8,685.6L500.2,684.3L498.4,682.3L498.1,680.2L496.3,679.8L496.7,678.3L495.7,675.4L494.5,676.7L493.0,678.6L491.7,677.1L490.6,675.0L488.1,673.7L486.0,672.8L483.2,673.2L478.9,674.2L476.1,675.4L475.3,676.9L471.8,676.9L469.7,677.8L467.5,678.8L464.7,678.8L463.3,677.6L464.3,675.9L464.3,673.3L463.3,670.4L462.1,666.3L460.8,663.9L461.4,661.6L461.1,659.2ZM218.6,742.8L215.8,746.7L212.9,750.1L211.5,753.6L208.7,759.1L211.5,767.0L211.5,790.8L200.1,790.8L203.0,767.0L203.7,759.1L205.1,753.6L208.7,749.0L212.9,745.7L217.2,742.5ZM278.4,775.8L285.5,771.3L299.7,767.0L313.9,767.0L328.1,767.0L342.4,763.0L349.5,765.0L356.6,763.0L363.7,757.9L370.8,753.6L377.9,751.8L385.0,756.5L392.1,757.9L399.3,761.0L403.5,765.8L410.6,761.0L420.6,753.6L427.7,754.3L434.8,753.6L441.9,751.1L449.0,753.6L456.1,751.8L463.3,753.6L470.4,754.6L477.5,752.8L484.6,751.8L491.7,751.8L498.8,754.3L505.9,755.4L505.9,790.8L278.4,790.8Z" fill="#fff" stroke="#e8c6a4" stroke-width=".55" stroke-linejoin="round"/><path d="M341.2,561.2L339.5,560.0L339.4,558.1L340.2,556.8L340.4,555.2L341.8,553.4L343.4,550.9L345.2,550.7L347.1,551.8L346.1,553.0L347.3,554.6L348.8,554.8L350.2,553.6L351.6,553.2L349.8,551.3L351.6,550.1L354.0,549.3L355.5,549.5L353.7,551.8L353.0,553.0L352.0,553.6L353.7,555.0L356.2,556.8L358.7,558.7L358.9,560.4L356.6,561.6L353.7,561.6L351.6,561.0L349.5,559.7L346.6,559.7L344.5,561.0L342.4,561.2ZM337.8,562.5L338.8,561.8L340.9,561.6L341.2,562.3L338.8,562.7ZM366.5,552.8L369.4,550.3L372.2,549.7L375.1,550.1L375.1,553.2L372.5,554.6L371.2,555.2L372.9,557.3L374.4,558.7L374.8,560.6L376.2,561.9L375.1,564.4L376.2,565.6L376.4,568.4L373.7,569.2L371.5,568.4L369.4,566.6L369.4,564.4L370.5,562.7L369.1,560.0L367.4,557.7L366.5,555.4Z" fill="#d1d1d1"/></svg></div><span class="t" style="left:139.20px;top:376.95px;font-size:14px;font-weight:700;color:#232329;letter-spacing:-0.064px;">Universe Nodes</span><svg class="ic" style="left:457px;top:374px;width:19px;height:19px" viewBox="457 374 19 19"><path d="M468 375.9H474V381.7ZM458.4 385.6V391H464.1Z" fill="#83849a"/><path d="M467.3 382.6L471.6 378.3M465.1 384.8L461 388.9" stroke="#83849a" stroke-width="2"/></svg><div class="abs" style="left:222.3px;top:751.3px;width:271.7px;height:13.7px;background:rgba(255,255,255,.75);border-bottom-right-radius:7px"></div><span class="t" style="left:228.00px;top:752.61px;font-size:10.5px;font-weight:700;color:#0f74b8;transform:scale(1.0933,1.0000);transform-origin:0 84.65%;">Leaflet</span><span class="t" style="left:267.50px;top:752.61px;font-size:10.5px;font-weight:700;color:#2a2a2a;transform:scale(1.0827,1.0000);transform-origin:0 84.65%;">| Copyright © MapBox All rights reserved</span><div class="abs" style="left:129.5px;top:605px;width:354.5px;height:150.5px;border-radius:6px;background:rgba(255,255,255,.75)"></div><span class="t" style="left:144.20px;top:621.57px;font-size:17.4px;font-weight:700;color:#24242a;transform:scale(1.0583,1.0000);transform-origin:0 84.65%;">Data Placement (In AZs)</span><span class="t" style="left:180.50px;top:650.51px;font-size:15.7px;font-weight:700;color:#24242a;letter-spacing:0.318px;">Primary Data</span><div class="abs" style="left:180.7px;top:670.8px;width:76.3px;height:18.1px;border-radius:2.5px;background:#42478d"></div><span class="t" style="left:186.80px;top:674.11px;font-size:10.5px;font-weight:700;color:#fff;transform:scale(0.9299,1.0000);transform-origin:0 84.65%;">Google Cloud</span><span class="t" style="left:181.00px;top:691.17px;font-size:13.5px;color:#222;letter-spacing:-0.056px;">1 Region, 3 AZS, 3 Nodes</span><span class="t" style="left:180.50px;top:718.71px;font-size:15.7px;font-weight:700;color:#24242a;letter-spacing:-0.066px;">Read Replica</span><span class="t" style="left:181.00px;top:740.17px;font-size:13.5px;color:#222;letter-spacing:0.073px;">None</span><svg class="ic" style="left:137px;top:647px;width:34px;height:36px" viewBox="137 647 34 36"><path d="M140.30 653.82V672.38A10.65 3.62 0 0 0 161.60 672.38V653.82Z" fill="#e8500f" stroke="#1b2050" stroke-width="1.3" stroke-linejoin="round"/><path d="M140.30 660.01A10.65 3.62 0 0 0 161.60 660.01" fill="none" stroke="#1b2050" stroke-width="1.3"/><path d="M140.30 666.19A10.65 3.62 0 0 0 161.60 666.19" fill="none" stroke="#1b2050" stroke-width="1.3"/><ellipse cx="150.95" cy="653.82" rx="10.65" ry="3.62" fill="#e8500f" stroke="#1b2050" stroke-width="1.3"/><circle cx="160.30" cy="671.80" r="8.00" fill="#1b2050"/><path d="M156.90 672.20l2.30 2.50 4.20 -5.60" fill="none" stroke="#fff" stroke-width="2.10" stroke-linecap="round" stroke-linejoin="round"/></svg><svg class="ic" style="left:137px;top:715px;width:34px;height:36px" viewBox="137 715 34 36"><path d="M140.30 721.82V739.78A10.65 3.62 0 0 0 161.60 739.78V721.82Z" fill="#4ea64e" stroke="#1b2050" stroke-width="1.3" stroke-linejoin="round"/><path d="M140.30 727.81A10.65 3.62 0 0 0 161.60 727.81" fill="none" stroke="#1b2050" stroke-width="1.3"/><path d="M140.30 733.79A10.65 3.62 0 0 0 161.60 733.79" fill="none" stroke="#1b2050" stroke-width="1.3"/><ellipse cx="150.95" cy="721.82" rx="10.65" ry="3.62" fill="#4ea64e" stroke="#1b2050" stroke-width="1.3"/><circle cx="160.30" cy="739.50" r="8.00" fill="#1b2050"/><path d="M156.10 737.40h6.4M164.50 741.60h-6.4" stroke="#fff" stroke-width="1.5" fill="none"/><path d="M162.20 735.00l2.6 2.4-2.6 2.4ZM158.40 739.20l-2.6 2.4 2.6 2.4Z" fill="#fff"/></svg><svg class="ic" style="left:119px;top:525px;width:50px;height:55px" viewBox="119 525 50 55"><defs><filter id="mks" x="-50%" y="-50%" width="200%" height="200%"><feGaussianBlur stdDeviation="1.6"/></filter></defs><circle cx="146" cy="558" r="9.5" fill="#000" opacity=".35" filter="url(#mks)"/><path d="M117.40 535.48V555.92A12.60 4.28 0 0 0 142.60 555.92V535.48Z" fill="#e8500f" stroke="#1b2050" stroke-width="1.3" stroke-linejoin="round"/><path d="M117.40 542.29A12.60 4.28 0 0 0 142.60 542.29" fill="none" stroke="#1b2050" stroke-width="1.3"/><path d="M117.40 549.11A12.60 4.28 0 0 0 142.60 549.11" fill="none" stroke="#1b2050" stroke-width="1.3"/><ellipse cx="130.00" cy="535.48" rx="12.60" ry="4.28" fill="#e8500f" stroke="#1b2050" stroke-width="1.3"/><path d="M119.40 542.68V562.62A12.60 4.28 0 0 0 144.60 562.62V542.68Z" fill="#e8500f" stroke="#1b2050" stroke-width="1.3" stroke-linejoin="round"/><path d="M119.40 549.33A12.60 4.28 0 0 0 144.60 549.33" fill="none" stroke="#1b2050" stroke-width="1.3"/><path d="M119.40 555.97A12.60 4.28 0 0 0 144.60 555.97" fill="none" stroke="#1b2050" stroke-width="1.3"/><ellipse cx="132.00" cy="542.68" rx="12.60" ry="4.28" fill="#e8500f" stroke="#1b2050" stroke-width="1.3"/><circle cx="143.40" cy="558.60" r="9.30" fill="#1b2050"/><path d="M139.45 559.07l2.67 2.91 4.88 -6.51" fill="none" stroke="#fff" stroke-width="2.44" stroke-linecap="round" stroke-linejoin="round"/><path d="M114.40 541.68V562.12A12.60 4.28 0 0 0 139.60 562.12V541.68Z" fill="#e8500f" stroke="#1b2050" stroke-width="1.3" stroke-linejoin="round"/><path d="M114.40 548.49A12.60 4.28 0 0 0 139.60 548.49" fill="none" stroke="#1b2050" stroke-width="1.3"/><path d="M114.40 555.31A12.60 4.28 0 0 0 139.60 555.31" fill="none" stroke="#1b2050" stroke-width="1.3"/><ellipse cx="127.00" cy="541.68" rx="12.60" ry="4.28" fill="#e8500f" stroke="#1b2050" stroke-width="1.3"/><circle cx="141.80" cy="562.60" r="9.80" fill="#1b2050"/><path d="M137.64 563.09l2.82 3.06 5.15 -6.86" fill="none" stroke="#fff" stroke-width="2.57" stroke-linecap="round" stroke-linejoin="round"/></svg></section><section class="charts"><div class="card" style="left:518px;top:361px;width:375px;height:190px"><div class="hr"></div><svg class="ic" style="left:0;top:0;width:375px;height:190px" viewBox="518 361 375 190"><path d="M548 444.1H893" stroke="#e9e9e9" stroke-width="1"/><path d="M548 489.6H893" stroke="#e9e9e9" stroke-width="1"/><path d="M604.3 406V535" stroke="#e9e9e9" stroke-width="1"/><path d="M690.4 406V535" stroke="#e9e9e9" stroke-width="1"/><path d="M776.5 406V535" stroke="#e9e9e9" stroke-width="1"/><path d="M863.5 406V535" stroke="#e9e9e9" stroke-width="1"/><path d="M548.0,494.4L551.5,499.9L554.9,490.5L558.4,494.7L561.8,485.0L565.2,475.4L568.7,475.2L572.1,492.7L575.6,498.8L579.0,492.2L582.5,471.8L586.0,504.7L589.4,498.3L592.9,507.1L596.3,502.4L599.8,497.6L603.2,497.8L606.6,489.3L610.1,501.7L613.5,501.3L617.0,496.1L620.5,501.3L623.9,502.0L627.4,499.9L630.8,485.0L634.2,471.8L637.7,499.2L641.1,489.6L644.6,504.9L648.0,482.4L651.5,492.2L655.0,503.5L658.4,501.7L661.9,501.3L665.3,500.0L668.8,501.3L672.2,503.2L675.6,500.7L679.1,500.0L682.5,497.3L686.0,498.8L689.5,504.7L692.9,492.2L696.4,484.5L699.8,494.1L703.2,474.3L706.7,472.3L710.1,482.4L713.6,469.2L717.0,474.7L720.5,480.2L724.0,485.7L727.4,479.8L730.9,486.7L734.3,486.1L737.8,490.8L741.2,491.8L744.6,457.2L748.1,432.9L751.5,455.0L755.0,488.3L758.5,492.2L761.9,492.7L765.4,489.3L768.8,489.3L772.2,467.1L775.7,482.0L779.1,483.9L782.6,497.3L786.0,488.3L789.5,504.7L793.0,499.5L796.4,495.9L799.9,494.0L803.3,469.6L806.8,481.2L810.2,498.0L813.7,500.2L817.1,462.3L820.5,453.3L824.0,496.3L827.5,494.7L830.9,504.9L834.4,486.0L837.8,488.9L841.2,495.6L844.7,499.5L848.2,501.7L851.6,503.9L855.0,493.7L858.5,498.8L862.0,497.6L865.4,494.1L868.9,494.1L872.3,495.1L875.8,480.5L879.2,466.4L882.7,472.3L886.1,498.8L889.5,490.1L893.0,498.3L893.0,535.0L548.0,535.0Z" fill="rgba(44,160,44,.06)"/><path d="M548.0,514.7L551.5,517.4L554.9,512.8L558.4,514.8L561.8,510.0L565.2,505.2L568.7,505.1L572.1,513.8L575.6,516.9L579.0,513.6L582.5,503.4L586.0,519.8L589.4,516.7L592.9,521.1L596.3,518.7L599.8,516.3L603.2,516.4L606.6,512.2L610.1,518.3L613.5,518.2L617.0,515.6L620.5,518.2L623.9,518.5L627.4,517.4L630.8,510.0L634.2,503.4L637.7,517.1L641.1,512.3L644.6,520.0L648.0,508.7L651.5,513.6L655.0,519.2L658.4,518.3L661.9,518.2L665.3,517.5L668.8,518.2L672.2,519.1L675.6,517.8L679.1,517.5L682.5,516.2L686.0,516.9L689.5,519.8L692.9,513.6L696.4,509.8L699.8,514.6L703.2,504.6L706.7,503.6L710.1,508.7L713.6,502.1L717.0,504.9L720.5,507.6L724.0,510.3L727.4,507.4L730.9,510.8L734.3,510.5L737.8,512.9L741.2,513.4L744.6,496.1L748.1,483.9L751.5,495.0L755.0,511.7L758.5,513.6L761.9,513.8L765.4,512.2L768.8,512.2L772.2,501.0L775.7,508.5L779.1,509.4L782.6,516.2L786.0,511.7L789.5,519.8L793.0,517.2L796.4,515.4L799.9,514.5L803.3,502.3L806.8,508.1L810.2,516.5L813.7,517.6L817.1,498.6L820.5,494.1L824.0,515.7L827.5,514.8L830.9,520.0L834.4,510.5L837.8,511.9L841.2,515.3L844.7,517.2L848.2,518.3L851.6,519.5L855.0,514.3L858.5,516.9L862.0,516.3L865.4,514.6L868.9,514.6L872.3,515.1L875.8,507.8L879.2,500.7L882.7,503.6L886.1,516.9L889.5,512.5L893.0,516.7L893.0,535.0L548.0,535.0Z" fill="rgba(240,130,30,.08)"/><path d="M548 535.3H893" stroke="#3a3a3a" stroke-width="1.3"/><path d="M548.0,514.7L551.5,517.4L554.9,512.8L558.4,514.8L561.8,510.0L565.2,505.2L568.7,505.1L572.1,513.8L575.6,516.9L579.0,513.6L582.5,503.4L586.0,519.8L589.4,516.7L592.9,521.1L596.3,518.7L599.8,516.3L603.2,516.4L606.6,512.2L610.1,518.3L613.5,518.2L617.0,515.6L620.5,518.2L623.9,518.5L627.4,517.4L630.8,510.0L634.2,503.4L637.7,517.1L641.1,512.3L644.6,520.0L648.0,508.7L651.5,513.6L655.0,519.2L658.4,518.3L661.9,518.2L665.3,517.5L668.8,518.2L672.2,519.1L675.6,517.8L679.1,517.5L682.5,516.2L686.0,516.9L689.5,519.8L692.9,513.6L696.4,509.8L699.8,514.6L703.2,504.6L706.7,503.6L710.1,508.7L713.6,502.1L717.0,504.9L720.5,507.6L724.0,510.3L727.4,507.4L730.9,510.8L734.3,510.5L737.8,512.9L741.2,513.4L744.6,496.1L748.1,483.9L751.5,495.0L755.0,511.7L758.5,513.6L761.9,513.8L765.4,512.2L768.8,512.2L772.2,501.0L775.7,508.5L779.1,509.4L782.6,516.2L786.0,511.7L789.5,519.8L793.0,517.2L796.4,515.4L799.9,514.5L803.3,502.3L806.8,508.1L810.2,516.5L813.7,517.6L817.1,498.6L820.5,494.1L824.0,515.7L827.5,514.8L830.9,520.0L834.4,510.5L837.8,511.9L841.2,515.3L844.7,517.2L848.2,518.3L851.6,519.5L855.0,514.3L858.5,516.9L862.0,516.3L865.4,514.6L868.9,514.6L872.3,515.1L875.8,507.8L879.2,500.7L882.7,503.6L886.1,516.9L889.5,512.5L893.0,516.7" fill="none" stroke="#ee7718" stroke-width="1.5" stroke-linejoin="round"/><path d="M548.0,494.4L551.5,499.9L554.9,490.5L558.4,494.7L561.8,485.0L565.2,475.4L568.7,475.2L572.1,492.7L575.6,498.8L579.0,492.2L582.5,471.8L586.0,504.7L589.4,498.3L592.9,507.1L596.3,502.4L599.8,497.6L603.2,497.8L606.6,489.3L610.1,501.7L613.5,501.3L617.0,496.1L620.5,501.3L623.9,502.0L627.4,499.9L630.8,485.0L634.2,471.8L637.7,499.2L641.1,489.6L644.6,504.9L648.0,482.4L651.5,492.2L655.0,503.5L658.4,501.7L661.9,501.3L665.3,500.0L668.8,501.3L672.2,503.2L675.6,500.7L679.1,500.0L682.5,497.3L686.0,498.8L689.5,504.7L692.9,492.2L696.4,484.5L699.8,494.1L703.2,474.3L706.7,472.3L710.1,482.4L713.6,469.2L717.0,474.7L720.5,480.2L724.0,485.7L727.4,479.8L730.9,486.7L734.3,486.1L737.8,490.8L741.2,491.8L744.6,457.2L748.1,432.9L751.5,455.0L755.0,488.3L758.5,492.2L761.9,492.7L765.4,489.3L768.8,489.3L772.2,467.1L775.7,482.0L779.1,483.9L782.6,497.3L786.0,488.3L789.5,504.7L793.0,499.5L796.4,495.9L799.9,494.0L803.3,469.6L806.8,481.2L810.2,498.0L813.7,500.2L817.1,462.3L820.5,453.3L824.0,496.3L827.5,494.7L830.9,504.9L834.4,486.0L837.8,488.9L841.2,495.6L844.7,499.5L848.2,501.7L851.6,503.9L855.0,493.7L858.5,498.8L862.0,497.6L865.4,494.1L868.9,494.1L872.3,495.1L875.8,480.5L879.2,466.4L882.7,472.3L886.1,498.8L889.5,490.1L893.0,498.3" fill="none" stroke="#389b2c" stroke-width="1.5" stroke-linejoin="round"/><circle cx="770" cy="383" r="7" fill="#ee7718"/><circle cx="831" cy="383" r="7" fill="#389b2c"/></svg></div><span class="t" style="left:538.30px;top:376.65px;font-size:14px;font-weight:700;color:#232329;">Total Ops / Sec</span><svg class="ic" style="left:646.9px;top:377.9px;width:12px;height:12px" viewBox="8 8 496 496" preserveAspectRatio="none" ><path fill="#b9b9bd" d="M370.72 133.28C339.458 104.008 298.888 87.962 255.848 88c-77.458.068-144.328 53.178-162.791 126.85-1.344 5.363-6.122 9.15-11.651 9.15H24.103c-7.498 0-13.194-6.807-11.807-14.176C33.933 94.924 134.813 8 256 8c66.448 0 126.791 26.136 171.315 68.685L463.03 40.97C478.149 25.851 504 36.559 504 57.941V192c0 13.255-10.745 24-24 24H345.941c-21.382 0-32.09-25.851-16.971-40.971l41.75-41.749zM32 296h134.059c21.382 0 32.09 25.851 16.971 40.971l-41.75 41.75c31.262 29.273 71.835 45.319 114.876 45.28 77.418-.07 144.315-53.144 162.787-126.849 1.344-5.363 6.122-9.15 11.651-9.15h57.304c7.498 0 13.194 6.807 11.807 14.176C478.067 417.076 377.187 504 256 504c-66.448 0-126.791-26.136-171.315-68.685L48.97 471.03C33.851 486.149 8 475.441 8 454.059V320c0-13.255 10.745-24 24-24z"/></svg><span class="t" style="left:781.30px;top:376.80px;font-size:13px;color:#2a2a2e;transform:scale(0.9396,1.0000);transform-origin:0 84.65%;">Read</span><span class="t" style="left:841.60px;top:376.80px;font-size:13px;color:#2a2a2e;letter-spacing:0.223px;">Write</span><span class="t" style="left:533.24px;top:438.24px;font-size:12px;color:#444;clip-path:inset(0px 0 0 0);">10</span><span class="t" style="left:539.91px;top:483.74px;font-size:12px;color:#444;clip-path:inset(0px 0 0 0);">5</span><span class="t" style="left:539.91px;top:529.14px;font-size:12px;color:#444;clip-path:inset(0px 0 0 0);">0</span><span class="t" style="left:588.20px;top:538.14px;font-size:12px;color:#444;transform:scale(1.0656,1.0000);transform-origin:0 84.65%;">14:30</span><span class="t" style="left:674.30px;top:538.14px;font-size:12px;color:#444;transform:scale(1.0656,1.0000);transform-origin:0 84.65%;">14:45</span><span class="t" style="left:760.40px;top:538.14px;font-size:12px;color:#444;transform:scale(1.0656,1.0000);transform-origin:0 84.65%;">15:00</span><span class="t" style="left:847.20px;top:538.14px;font-size:12px;color:#444;transform:scale(1.0656,1.0000);transform-origin:0 84.65%;">15:15</span><div class="card" style="left:518px;top:576px;width:375px;height:190px"><div class="hr"></div><svg class="ic" style="left:0;top:0;width:375px;height:190px" viewBox="518 576 375 190"><path d="M548 621.7H893" stroke="#e9e9e9" stroke-width="1"/><path d="M548 653.9H893" stroke="#e9e9e9" stroke-width="1"/><path d="M548 686.1H893" stroke="#e9e9e9" stroke-width="1"/><path d="M548 718.2H893" stroke="#e9e9e9" stroke-width="1"/><path d="M604.3 621V750.3" stroke="#e9e9e9" stroke-width="1"/><path d="M690.4 621V750.3" stroke="#e9e9e9" stroke-width="1"/><path d="M776.5 621V750.3" stroke="#e9e9e9" stroke-width="1"/><path d="M863.5 621V750.3" stroke="#e9e9e9" stroke-width="1"/><path d="M548.0,657.8L551.5,653.0L554.9,660.7L558.4,658.8L561.8,653.7L565.2,660.7L568.7,661.4L572.1,652.3L575.6,655.2L579.0,660.8L582.5,666.7L586.0,655.8L589.4,661.4L592.9,658.5L596.3,664.5L599.8,659.3L603.2,651.4L606.6,656.5L610.1,661.6L613.5,663.2L617.0,657.8L620.5,646.6L623.9,653.2L627.4,659.8L630.8,657.3L634.2,661.2L637.7,659.5L641.1,666.2L644.6,666.5L648.0,665.9L651.5,657.3L655.0,657.8L658.4,660.8L661.9,659.8L665.3,658.8L668.8,654.2L672.2,651.1L675.6,658.8L679.1,663.4L682.5,667.7L686.0,659.8L689.5,653.7L692.9,657.8L696.4,661.4L699.8,663.4L703.2,662.2L706.7,661.2L710.1,667.0L713.6,671.6L717.0,670.1L720.5,663.9L724.0,665.2L727.4,665.9L730.9,662.9L734.3,669.0L737.8,668.3L741.2,668.7L744.6,669.5L748.1,672.1L751.5,669.5L755.0,668.8L758.5,673.7L761.9,671.6L765.4,664.5L768.8,669.5L772.2,665.9L775.7,663.2L779.1,664.6L782.6,662.9L786.0,669.5L789.5,661.4L793.0,658.3L796.4,659.8L799.9,664.5L803.3,664.5L806.8,665.5L810.2,662.4L813.7,661.4L817.1,666.5L820.5,666.5L824.0,666.5L827.5,659.8L830.9,658.8L834.4,667.0L837.8,662.4L841.2,654.7L844.7,661.4L848.2,655.1L851.6,662.9L855.0,663.6L858.5,662.9L862.0,653.2L865.4,656.3L868.9,667.0L872.3,657.0L875.8,660.7L879.2,659.8L882.7,664.5L886.1,663.4L889.5,660.3L893.0,651.6L893.0,750.3L548.0,750.3Z" fill="rgba(44,160,44,.06)"/><path d="M548.0,747.6L551.5,747.6L554.9,747.6L558.4,747.6L561.8,747.6L565.2,747.6L568.7,747.6L572.1,747.6L575.6,747.6L579.0,747.6L582.5,747.6L586.0,747.6L589.4,747.6L592.9,747.6L596.3,747.6L599.8,747.6L603.2,747.6L606.6,747.6L610.1,747.6L613.5,747.6L617.0,747.6L620.5,747.6L623.9,747.6L627.4,747.6L630.8,747.6L634.2,747.6L637.7,747.6L641.1,747.6L644.6,747.6L648.0,747.6L651.5,747.6L655.0,747.6L658.4,747.6L661.9,747.6L665.3,747.6L668.8,747.6L672.2,747.6L675.6,747.6L679.1,747.6L682.5,747.6L686.0,747.6L689.5,747.6L692.9,747.6L696.4,747.6L699.8,747.6L703.2,747.6L706.7,747.6L710.1,747.6L713.6,747.6L717.0,747.6L720.5,747.6L724.0,747.6L727.4,747.6L730.9,747.6L734.3,747.6L737.8,747.6L741.2,747.6L744.6,747.6L748.1,747.6L751.5,747.6L755.0,747.6L758.5,747.6L761.9,747.6L765.4,747.6L768.8,747.6L772.2,747.6L775.7,747.6L779.1,747.6L782.6,747.6L786.0,747.6L789.5,747.6L793.0,747.6L796.4,747.6L799.9,747.6L803.3,747.6L806.8,747.6L810.2,747.6L813.7,747.6L817.1,747.6L820.5,747.6L824.0,747.6L827.5,747.6L830.9,747.6L834.4,747.6L837.8,747.6L841.2,747.6L844.7,747.6L848.2,747.6L851.6,747.6L855.0,747.6L858.5,747.6L862.0,747.6L865.4,747.6L868.9,747.6L872.3,747.6L875.8,747.6L879.2,747.6L882.7,747.6L886.1,747.6L889.5,747.6L893.0,747.6L893.0,750.3L548.0,750.3Z" fill="rgba(240,130,30,.08)"/><path d="M548 750.6H893" stroke="#3a3a3a" stroke-width="1.3"/><path d="M548.0,747.6L551.5,747.6L554.9,747.6L558.4,747.6L561.8,747.6L565.2,747.6L568.7,747.6L572.1,747.6L575.6,747.6L579.0,747.6L582.5,747.6L586.0,747.6L589.4,747.6L592.9,747.6L596.3,747.6L599.8,747.6L603.2,747.6L606.6,747.6L610.1,747.6L613.5,747.6L617.0,747.6L620.5,747.6L623.9,747.6L627.4,747.6L630.8,747.6L634.2,747.6L637.7,747.6L641.1,747.6L644.6,747.6L648.0,747.6L651.5,747.6L655.0,747.6L658.4,747.6L661.9,747.6L665.3,747.6L668.8,747.6L672.2,747.6L675.6,747.6L679.1,747.6L682.5,747.6L686.0,747.6L689.5,747.6L692.9,747.6L696.4,747.6L699.8,747.6L703.2,747.6L706.7,747.6L710.1,747.6L713.6,747.6L717.0,747.6L720.5,747.6L724.0,747.6L727.4,747.6L730.9,747.6L734.3,747.6L737.8,747.6L741.2,747.6L744.6,747.6L748.1,747.6L751.5,747.6L755.0,747.6L758.5,747.6L761.9,747.6L765.4,747.6L768.8,747.6L772.2,747.6L775.7,747.6L779.1,747.6L782.6,747.6L786.0,747.6L789.5,747.6L793.0,747.6L796.4,747.6L799.9,747.6L803.3,747.6L806.8,747.6L810.2,747.6L813.7,747.6L817.1,747.6L820.5,747.6L824.0,747.6L827.5,747.6L830.9,747.6L834.4,747.6L837.8,747.6L841.2,747.6L844.7,747.6L848.2,747.6L851.6,747.6L855.0,747.6L858.5,747.6L862.0,747.6L865.4,747.6L868.9,747.6L872.3,747.6L875.8,747.6L879.2,747.6L882.7,747.6L886.1,747.6L889.5,747.6L893.0,747.6" fill="none" stroke="#ee7718" stroke-width="1.5" stroke-linejoin="round"/><path d="M548.0,657.8L551.5,653.0L554.9,660.7L558.4,658.8L561.8,653.7L565.2,660.7L568.7,661.4L572.1,652.3L575.6,655.2L579.0,660.8L582.5,666.7L586.0,655.8L589.4,661.4L592.9,658.5L596.3,664.5L599.8,659.3L603.2,651.4L606.6,656.5L610.1,661.6L613.5,663.2L617.0,657.8L620.5,646.6L623.9,653.2L627.4,659.8L630.8,657.3L634.2,661.2L637.7,659.5L641.1,666.2L644.6,666.5L648.0,665.9L651.5,657.3L655.0,657.8L658.4,660.8L661.9,659.8L665.3,658.8L668.8,654.2L672.2,651.1L675.6,658.8L679.1,663.4L682.5,667.7L686.0,659.8L689.5,653.7L692.9,657.8L696.4,661.4L699.8,663.4L703.2,662.2L706.7,661.2L710.1,667.0L713.6,671.6L717.0,670.1L720.5,663.9L724.0,665.2L727.4,665.9L730.9,662.9L734.3,669.0L737.8,668.3L741.2,668.7L744.6,669.5L748.1,672.1L751.5,669.5L755.0,668.8L758.5,673.7L761.9,671.6L765.4,664.5L768.8,669.5L772.2,665.9L775.7,663.2L779.1,664.6L782.6,662.9L786.0,669.5L789.5,661.4L793.0,658.3L796.4,659.8L799.9,664.5L803.3,664.5L806.8,665.5L810.2,662.4L813.7,661.4L817.1,666.5L820.5,666.5L824.0,666.5L827.5,659.8L830.9,658.8L834.4,667.0L837.8,662.4L841.2,654.7L844.7,661.4L848.2,655.1L851.6,662.9L855.0,663.6L858.5,662.9L862.0,653.2L865.4,656.3L868.9,667.0L872.3,657.0L875.8,660.7L879.2,659.8L882.7,664.5L886.1,663.4L889.5,660.3L893.0,651.6" fill="none" stroke="#389b2c" stroke-width="1.5" stroke-linejoin="round"/><circle cx="770" cy="598" r="7" fill="#ee7718"/><circle cx="831" cy="598" r="7" fill="#389b2c"/></svg></div><span class="t" style="left:538.30px;top:591.65px;font-size:14px;font-weight:700;color:#232329;letter-spacing:0.047px;">Average Latency (µs)</span><svg class="ic" style="left:688.3px;top:592.9px;width:12px;height:12px" viewBox="8 8 496 496" preserveAspectRatio="none" ><path fill="#b9b9bd" d="M370.72 133.28C339.458 104.008 298.888 87.962 255.848 88c-77.458.068-144.328 53.178-162.791 126.85-1.344 5.363-6.122 9.15-11.651 9.15H24.103c-7.498 0-13.194-6.807-11.807-14.176C33.933 94.924 134.813 8 256 8c66.448 0 126.791 26.136 171.315 68.685L463.03 40.97C478.149 25.851 504 36.559 504 57.941V192c0 13.255-10.745 24-24 24H345.941c-21.382 0-32.09-25.851-16.971-40.971l41.75-41.749zM32 296h134.059c21.382 0 32.09 25.851 16.971 40.971l-41.75 41.75c31.262 29.273 71.835 45.319 114.876 45.28 77.418-.07 144.315-53.144 162.787-126.849 1.344-5.363 6.122-9.15 11.651-9.15h57.304c7.498 0 13.194 6.807 11.807 14.176C478.067 417.076 377.187 504 256 504c-66.448 0-126.791-26.136-171.315-68.685L48.97 471.03C33.851 486.149 8 475.441 8 454.059V320c0-13.255 10.745-24 24-24z"/></svg><span class="t" style="left:781.30px;top:591.80px;font-size:13px;color:#2a2a2e;transform:scale(0.9396,1.0000);transform-origin:0 84.65%;">Read</span><span class="t" style="left:841.60px;top:591.80px;font-size:13px;color:#2a2a2e;letter-spacing:0.223px;">Write</span><span class="t" style="left:527.24px;top:615.64px;font-size:12px;color:#444;clip-path:inset(5.858px 0 0 0);">20k</span><span class="t" style="left:527.24px;top:648.04px;font-size:12px;color:#444;clip-path:inset(0px 0 0 0);">15k</span><span class="t" style="left:527.24px;top:680.24px;font-size:12px;color:#444;clip-path:inset(0px 0 0 0);">10k</span><span class="t" style="left:533.91px;top:712.34px;font-size:12px;color:#444;clip-path:inset(0px 0 0 0);">5k</span><span class="t" style="left:539.91px;top:744.44px;font-size:12px;color:#444;clip-path:inset(0px 0 0 0);">0</span><span class="t" style="left:588.20px;top:753.14px;font-size:12px;color:#444;transform:scale(1.0656,1.0000);transform-origin:0 84.65%;">14:30</span><span class="t" style="left:674.30px;top:753.14px;font-size:12px;color:#444;transform:scale(1.0656,1.0000);transform-origin:0 84.65%;">14:45</span><span class="t" style="left:760.40px;top:753.14px;font-size:12px;color:#444;transform:scale(1.0656,1.0000);transform-origin:0 84.65%;">15:00</span><span class="t" style="left:847.20px;top:753.14px;font-size:12px;color:#444;transform:scale(1.0656,1.0000);transform-origin:0 84.65%;">15:15</span></section><section class="usage"><div class="card" style="left:917px;top:361px;width:375px;height:190px"><div class="hr"></div></div><span class="t" style="left:937.00px;top:376.65px;font-size:14px;font-weight:700;color:#232329;letter-spacing:-0.198px;">Disk Usage</span><span class="t" style="left:1227.80px;top:375.80px;font-size:15px;color:#e04d14;transform:scale(0.9507,1.0000);transform-origin:0 84.65%;">Details</span><span class="t" style="left:936.86px;top:423.96px;font-size:28.4px;font-weight:700;color:#2b2d78;transform:scale(1.2140,1.2150);transform-origin:0 84.65%;">1098.4</span><span class="t" style="left:1051.00px;top:434.90px;font-size:15px;color:#2b2d78;transform:scale(0.9593,1.0000);transform-origin:0 84.65%;">GB used</span><span class="t" style="left:937.00px;top:468.77px;font-size:13.5px;color:#7f8298;letter-spacing:0.043px;">1150 GB free out of 2249 GB</span><div class="abs" style="left:937px;top:495px;width:335px;height:30px;border-radius:5px;background:#e2e2e6;overflow:hidden"><div style="width:163.9px;height:30px;background:#a2b83c"></div></div><div class="abs" style="left:947px;top:502.2px;width:46.2px;height:15.6px;border-radius:2.5px;background:#8b9c40"></div><span class="t" style="left:949.70px;top:504.20px;font-size:13px;font-weight:700;color:#fff;transform:scale(1.0847,1.0000);transform-origin:0 84.65%;">48.8%</span><div class="card" style="left:917px;top:576px;width:375px;height:190px"><div class="hr"></div></div><span class="t" style="left:937.00px;top:591.65px;font-size:14px;font-weight:700;color:#232329;letter-spacing:-0.263px;">Tables</span><span class="t" style="left:1227.80px;top:590.80px;font-size:15px;color:#e04d14;transform:scale(0.9507,1.0000);transform-origin:0 84.65%;">Details</span><span class="t" style="left:982.11px;top:668.66px;font-size:28.4px;font-weight:700;color:#2b2d78;transform:scale(1.3186,1.2150);transform-origin:0 84.65%;">0</span><span class="t" style="left:974.95px;top:703.95px;font-size:14px;transform:scale(0.9449,1.0000);transform-origin:0 84.65%;">YSQL</span><span class="t" style="left:1085.76px;top:668.66px;font-size:28.4px;font-weight:700;color:#2b2d78;transform:scale(1.1499,1.2150);transform-origin:0 84.65%;">14</span><span class="t" style="left:1085.85px;top:703.95px;font-size:14px;transform:scale(0.9521,1.0000);transform-origin:0 84.65%;">YCQL</span><span class="t" style="left:1208.21px;top:668.66px;font-size:28.4px;font-weight:700;color:#2b2d78;transform:scale(1.0846,1.2150);transform-origin:0 84.65%;">1</span><span class="t" style="left:1196.70px;top:703.95px;font-size:14px;transform:scale(0.9187,1.0000);transform-origin:0 84.65%;">YEDIS</span></section></main></body></html>
